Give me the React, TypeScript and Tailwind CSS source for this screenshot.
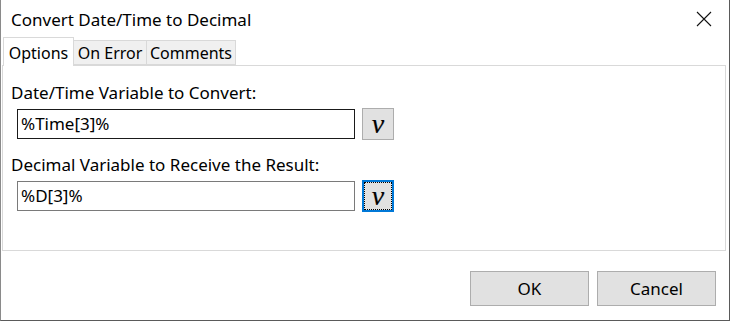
import * as React from "react";

const ui = { fontFamily: '"Noto Sans", "Liberation Sans", Arial, sans-serif' };

function VarButton({ focused }: { focused?: boolean }) {
  return (
    <button
      className={
        "ml-[7px] flex h-[32px] w-[32px] items-center justify-center bg-[#e1e1e1] " +
        (focused ? "border-2 border-[#0078d7]" : "border border-[#adadad]")
      }
    >
      <span
        className={
          "flex h-full w-full items-center justify-center " +
          (focused ? "outline outline-1 outline-dotted outline-black -outline-offset-1" : "")
        }
      >
        <span
          className="text-[28px] italic leading-none text-black"
          style={{ fontFamily: '"Liberation Serif", "Times New Roman", serif', WebkitTextStroke: "0.2px black" }}
        >
          v
        </span>
      </span>
    </button>
  );
}

function Field({ label, value, dark }: { label: string; value: string; dark?: boolean }) {
  return (
    <div>
      <div className="pl-[8px] text-[17px] leading-[20px] text-black">{label}</div>
      <div className="mt-[5px] flex items-center pl-[14px]">
        <div
          className={
            "flex h-[30px] w-[338px] items-center border bg-white pl-[3px] text-[17px] text-black " +
            (dark ? "border-[#1a1a1a]" : "border-[#7a7a7a]")
          }
        >
          {value}
        </div>
        <VarButton focused={!dark} />
      </div>
    </div>
  );
}

export default function App() {
  const tabs = ["Options", "On Error", "Comments"];
  return (
    <div
      className="flex h-[321px] w-[730px] flex-col border-b border-l border-r border-b-[#5a5a5a] border-l-[#8a8a8a] border-r-[#5a5a5a] bg-white"
      style={ui}
    >
      <div className="flex h-[37px] items-center justify-between pl-[10px] pr-[17px]">
        <span className="pt-[2px] text-[17px] text-black">Convert Date/Time to Decimal</span>
        <svg width="16" height="16" viewBox="0 0 16 16" className="mt-[1px]">
          <path d="M1 1 L15 15 M15 1 L1 15" stroke="#111" strokeWidth="1.1" />
        </svg>
      </div>

      <div className="relative z-10 flex h-[28px] items-end pl-[2px]">
        {tabs.map((t, i) =>
          i === 0 ? (
            <div
              key={t}
              className="-mb-px flex h-[29px] w-[71px] items-center justify-center border border-b-0 border-[#d9d9d9] bg-white pt-[1px] text-[16px] text-black"
            >
              {t}
            </div>
          ) : (
            <div
              key={t}
              className={
                "flex h-[25px] items-center justify-center border border-l-0 border-[#d9d9d9] bg-[#f0f0f0] text-[16px] text-black " +
                (i === 1 ? "w-[73px]" : "w-[89px]")
              }
            >
              {t}
            </div>
          )
        )}
      </div>

      <div className="mx-[1px] h-[186px] w-[724px] border border-[#d9d9d9] bg-white pt-[17px]">
        <Field label="Date/Time Variable to Convert:" value="%Time[3]%" dark />
        <div className="h-[15px]" />
        <Field label="Decimal Variable to Receive the Result:" value="%D[3]%" />
      </div>

      <div className="flex flex-1 justify-end gap-[8px] pr-[13px] pt-[20px]">
        <button className="h-[35px] w-[119px] border border-[#adadad] bg-[#e1e1e1] text-[17px] text-black">
          OK
        </button>
        <button className="h-[35px] w-[119px] border border-[#adadad] bg-[#e1e1e1] text-[17px] text-black">
          Cancel
        </button>
      </div>
    </div>
  );
}
